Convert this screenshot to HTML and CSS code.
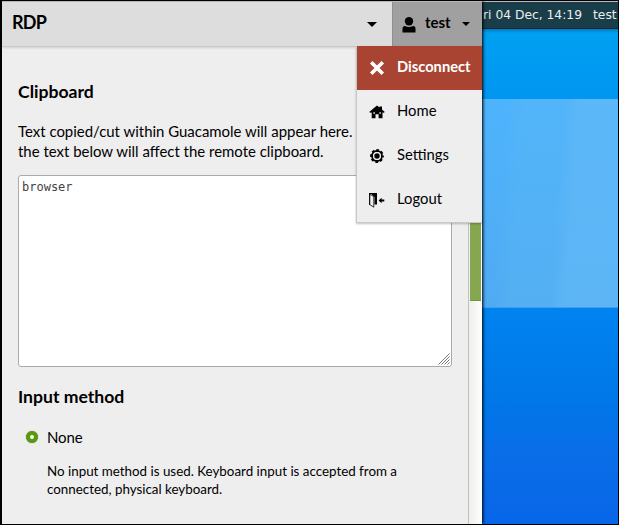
FILE: index.html
```html
<!DOCTYPE html>
<html lang="en">
<head>
<meta charset="utf-8">
<title>RDP</title>
<link rel="stylesheet" href="styles.css">
</head>
<body>
<div class="screen">
  <aside class="panel">
    <header class="header">
      <h1 class="title">RDP</h1>
      <i class="caret"></i>
      <div class="user">
        <svg class="user-icon" width="14" height="16" viewBox="0 0 14 16"><circle cx="7" cy="4.2" r="4.2"/><path d="M.5 15.5v-4Q.5 9 3 9q4 1.8 8 0 2.500 0 2.500 2.500v4z"/></svg>
        <span class="user-name">test</span>
        <i class="caret small"></i>
        <nav class="menu">
          <a class="item danger"><svg width="16" height="16" viewBox="0 0 16 16"><path d="M3.500 3.500l9 9m0-9l-9 9" stroke="#fff" stroke-width="3.600" stroke-linecap="square"/></svg><span>Disconnect</span></a>
          <a class="item"><svg width="16" height="16" viewBox="0 0 16 16"><path d="M8 1.500l2.500 2V2.500h2.500v3L15.800 8l-1 .8-1.300-.3v5.700H9.600v-4H6.500v4H2.700V8.500l-1.500.3-1-.8z"/><path d="M4.400 8.200h1.500v1.500H4.400zM10.400 8.200h1.500v1.500h-1.500z" fill="#eee"/></svg><span>Home</span></a>
          <a class="item"><svg width="16" height="16" viewBox="0 0 16 16"><circle cx="8" cy="8" r="6" fill="none" stroke="#000" stroke-width="1.800" stroke-dasharray="2.712 2" stroke-dashoffset="1.356"/><circle cx="8" cy="8" r="4.900" fill="none" stroke="#000" stroke-width="2"/><circle cx="8" cy="8" r="3.900" fill="#eee"/><circle cx="8" cy="8" r="2.700"/></svg><span>Settings</span></a>
          <a class="item"><svg width="16" height="16" viewBox="0 0 16 16"><path d="M.5 1v12M.5 1.500h7v10.500" fill="none" stroke="#000"/><path d="M1 1h7v11.500H5.500V5z"/><path d="M.8 2.200l4 2.500v10.500l-4-2.600z" fill="#eee" stroke="#000" stroke-width=".8"/><path d="M9.600 8.500l3-2.700v1.800h2.700v1.800h-2.700v1.800z"/></svg><span>Logout</span></a>
        </nav>
      </div>
    </header>
    <div class="body">
      <main class="content">
        <h2 class="heading">Clipboard</h2>
        <p class="text">Text copied/cut within Guacamole will appear here.<br>the text below will affect the remote clipboard.</p>
        <div class="field">browser<svg class="grip" width="12" height="12" viewBox="0 0 12 12"><path d="M.5 11.500l11-11M3.500 11.500l8-8M6.500 11.500l5-5M9.500 11.500l2-2" stroke="#777" fill="none"/></svg></div>
        <h2 class="heading second">Input method</h2>
        <div class="choice"><i class="radio"></i><span>None</span></div>
        <p class="note">No input method is used. Keyboard input is accepted from a<br>connected, physical keyboard.</p>
      </main>
      <div class="scroll"><div class="thumb"></div></div>
    </div>
  </aside>
  <section class="desktop">
    <div class="bar"><span class="clock">ri 04 Dec, 14:19</span><span>test</span></div>
    <div class="sky"></div>
    <div class="logo"></div>
    <div class="sea"></div>
  </section>
</div>
</body>
</html>
```
FILE: styles.css
```css
* { box-sizing: border-box; }
body { margin: 0; overflow: hidden; font-family: Lato, "Liberation Sans", sans-serif; color: #000; }
.screen { width: 619px; height: 525px; display: flex; border: 1px solid #000; border-left-width: 2px; background: #000; }
.panel { width: 480px; height: 523px; display: flex; flex-direction: column; background: #eee; border-top: 1px solid #bdb6bd; box-shadow: 1px 0 3px #000; position: relative; z-index: 1; }
.header { height: 45px; flex: none; display: flex; align-items: center; background: #ddd; border-bottom: 1px solid #c8c8c8; box-shadow: 0 1px 2px rgba(0,0,0,.12); position: relative; z-index: 2; }
.title { flex: 1; margin: 0; padding: 0 0 4px 10px; font-size: 18px; line-height: 20px; letter-spacing: -.7px; }
.caret { border: 5px solid transparent; border-top-color: #000; border-bottom: 0; margin: 0 15px 0 0; }
.user { width: 90px; height: 44px; align-self: flex-start; display: flex; align-items: center; background: #a0a0a0; border-left: 1px solid #8f8f8f; position: relative; padding-left: 9px; }
.user-icon { margin-top: 1px; }
.user-name { width: 26px; margin: 0 11px 4px 9px; font-size: 15px; font-weight: bold; line-height: 20px; }
.caret.small { border-width: 4px 4px 0; margin: 0; }
.menu { position: absolute; right: 0; top: 44px; width: 126px; height: 177px; background: #eee; border: 1px solid #c8c8c8; border-width: 0 0 1px 1px; box-shadow: 0 1px 2px rgba(0,0,0,.25); }
.item { display: flex; align-items: center; height: 44px; padding-left: 12px; font-size: 14.800px; line-height: 20px; }
.item svg { flex: none; }
.item span { margin: 0 0 4px 12px; }
.danger { background: #a94432; color: #fff; font-weight: bold; font-size: 14.700px; }
.body { flex: 1; min-height: 0; display: flex; }
.content { width: 466px; padding: 34px 16px 0; }
.heading { margin: 0; font-size: 17.600px; line-height: 22px; }
.text { margin: 18px 0 14px; font-size: 14.940px; line-height: 20px; white-space: nowrap; }
.field { width: 434px; height: 192px; border: 1px solid #aaa; border-radius: 3px; background: #fff; padding: 3px; font: 12px/16px "DejaVu Sans Mono", monospace; color: #444; position: relative; }
.grip { position: absolute; right: 1px; bottom: 1px; }
.second { margin-top: 19px; }
.choice { display: flex; align-items: center; height: 20px; margin-top: 19px; padding-left: 8px; font-size: 15px; letter-spacing: -.1px; }
.radio { width: 12px; height: 12px; border: 4px solid #5a980c; border-radius: 50%; background: #fff; box-shadow: 0 0 1px #777; }
.choice span { margin: 0 0 1px 9px; }
.note { margin: 15px 0 0 29px; font-size: 13.370px; line-height: 18px; white-space: nowrap; }
.scroll { width: 14px; border-left: 1px solid #c1c1bd; background: linear-gradient(90deg, #efeeeb, #fff); padding-left: 1px; }
.thumb { width: 11px; height: 254px; background: #86a750; border-bottom: 1px solid #749440; }
.desktop { width: 136px; display: flex; flex-direction: column; overflow: hidden; }
.bar { height: 28px; flex: none; display: flex; align-items: center; border-top: 1px solid #bdb6bd; border-bottom: 1px solid #17242b; background: #1a3e49; color: #ededed; font: 12.300px/16px "DejaVu Sans", sans-serif; white-space: nowrap; }
.clock { width: 111px; flex: none; padding-left: 1px; }
.sky { height: 70px; background: linear-gradient(#0478bd, #00a0f2 4px, #0096f1); flex: none; }
.logo { height: 209px; flex: none; border-bottom: 1px solid #409eef; background: linear-gradient(94deg, rgba(80,175,250,.3) 25px, rgba(88,180,245,.5) 42px 82px, rgba(96,184,247,.8) 98px), linear-gradient(#4cb6fe, #50a9ef); }
.sea { flex: 1; background: linear-gradient(#0083f0, #0078e8 40%, #0a6de8 70%, #0866e8); }
```
